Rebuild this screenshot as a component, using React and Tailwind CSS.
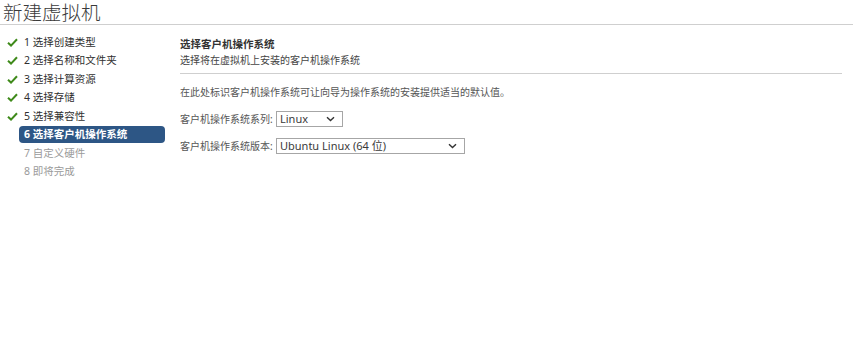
import React from "react";

const steps = [
	{ n: 1, label: "选择创建类型", state: "done" },
	{ n: 2, label: "选择名称和文件夹", state: "done" },
	{ n: 3, label: "选择计算资源", state: "done" },
	{ n: 4, label: "选择存储", state: "done" },
	{ n: 5, label: "选择兼容性", state: "done" },
	{ n: 6, label: "选择客户机操作系统", state: "active" },
	{ n: 7, label: "自定义硬件", state: "todo" },
	{ n: 8, label: "即将完成", state: "todo" },
];

function Check() {
	return (
		<svg width="11" height="9" viewBox="0 0 11 9">
			<path d="M1 4.8 L4 7.6 L10 1.2" fill="none" stroke="#3f8a1a" strokeWidth="2" />
		</svg>
	);
}

function Chevron() {
	return (
		<svg width="9" height="6" viewBox="0 0 9 6">
			<path d="M1 1.2 L4.5 4.6 L8 1.2" fill="none" stroke="#333" strokeWidth="1.4" />
		</svg>
	);
}

function FakeSelect({ value, width }) {
	return (
		<div
			className={`flex h-[16px] items-center justify-between border border-[#a6a6a6] bg-white pl-[3px] pr-[7px] text-[11px] leading-[14px] text-[#3a3a3a] ${width}`}
		>
			<span>{value}</span>
			<Chevron />
		</div>
	);
}

export default function App() {
	return (
		<div
			className="h-[354px] w-full bg-white text-[#333]"
			style={{ fontFamily: '"Noto Sans", "Noto Sans CJK SC", sans-serif' }}
		>
			<div className="mr-[12px] border-b border-[#cfcfcf] pl-[3px] pt-[1px] text-[19.5px] font-light leading-[23px] text-[#3a3a3a]">
				<span className="block h-[23px]">新建虚拟机</span>
			</div>
			<div className="flex">
				<div className="w-[180px] pl-[7px] pt-[8px]">
					{steps.map((s) => (
						<div key={s.n} className="flex h-[18.5px] items-center">
							<div className="flex w-[12px] items-center">
								{s.state === "done" && <Check />}
							</div>
							<div
								className={`flex h-[17px] w-[146px] items-center rounded-[4px] pl-[5px] text-[10.5px] leading-[17px] ${
									s.state === "active"
										? "bg-[#2d5685] font-bold text-white"
										: s.state === "todo"
											? "text-[#9a9a9a]"
											: "text-[#2f2f2f]"
								}`}
							>
								{s.n} {s.label}
							</div>
						</div>
					))}
				</div>
				<div className="mr-[23px] flex-1 pt-[11px] text-[10px]">
					<div className="text-[10.5px] font-bold leading-[16px] text-[#333]">选择客户机操作系统</div>
					<div className="leading-[16px] text-[#444]">选择将在虚拟机上安装的客户机操作系统</div>
					<div className="mt-[5px] border-b border-[#cfcfcf]" />
					<div className="mt-[10px] leading-[16px] text-[#555]">
						在此处标识客户机操作系统可让向导为操作系统的安装提供适当的默认值。
					</div>
					<div className="mt-[11px] flex items-center">
						<div className="w-[96px] leading-[16px] text-[#555]">客户机操作系统系列:</div>
						<FakeSelect value="Linux" width="w-[67px]" />
					</div>
					<div className="mt-[11px] flex items-center">
						<div className="w-[96px] leading-[16px] text-[#555]">客户机操作系统版本:</div>
						<FakeSelect value="Ubuntu Linux (64 位)" width="w-[189px]" />
					</div>
				</div>
			</div>
		</div>
	);
}
